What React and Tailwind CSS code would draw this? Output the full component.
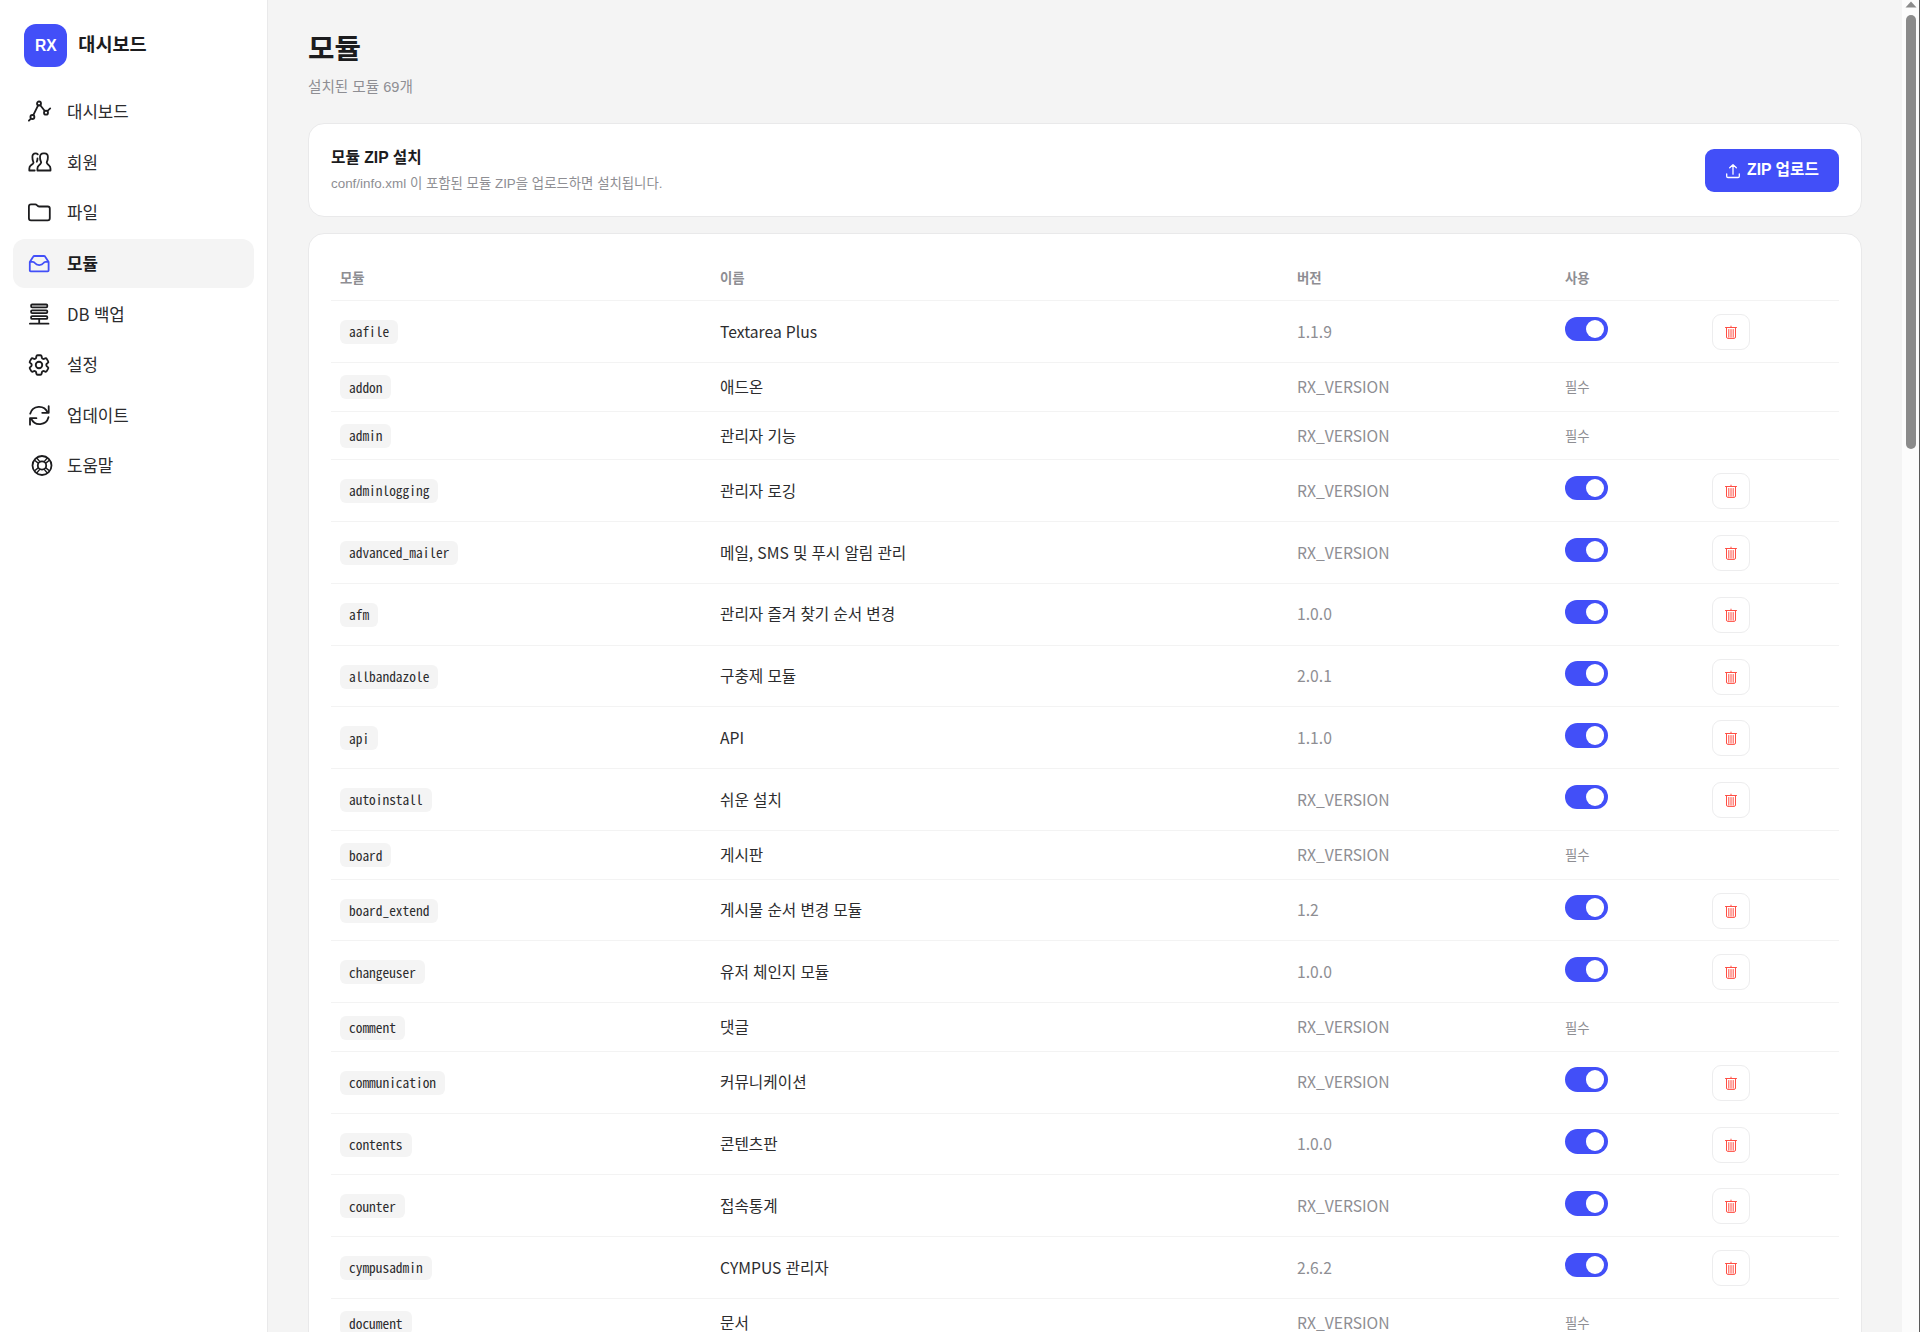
import React from 'react';
import { HiOutlineCog6Tooth } from 'react-icons/hi2';

const modules = [
  ['aafile', 'Textarea Plus', '1.1.9', true],
  ['addon', '애드온', 'RX_VERSION', false],
  ['admin', '관리자 기능', 'RX_VERSION', false],
  ['adminlogging', '관리자 로깅', 'RX_VERSION', true],
  ['advanced_mailer', '메일, SMS 및 푸시 알림 관리', 'RX_VERSION', true],
  ['afm', '관리자 즐겨 찾기 순서 변경', '1.0.0', true],
  ['allbandazole', '구충제 모듈', '2.0.1', true],
  ['api', 'API', '1.1.0', true],
  ['autoinstall', '쉬운 설치', 'RX_VERSION', true],
  ['board', '게시판', 'RX_VERSION', false],
  ['board_extend', '게시물 순서 변경 모듈', '1.2', true],
  ['changeuser', '유저 체인지 모듈', '1.0.0', true],
  ['comment', '댓글', 'RX_VERSION', false],
  ['communication', '커뮤니케이션', 'RX_VERSION', true],
  ['contents', '콘텐츠판', '1.0.0', true],
  ['counter', '접속통계', 'RX_VERSION', true],
  ['cympusadmin', 'CYMPUS 관리자', '2.6.2', true],
  ['document', '문서', 'RX_VERSION', false],
];

function Glyph({ children }) {
  return (
    <svg viewBox="0 0 27 27" className="size-[27px]" fill="none" stroke="currentColor" strokeWidth="1.8" strokeLinecap="round" strokeLinejoin="round">
      {children}
    </svg>
  );
}

const GraphIcon = () => (
  <Glyph>
    <circle cx="6.4" cy="19" r="2" />
    <circle cx="13" cy="5.5" r="2" />
    <circle cx="20" cy="14.7" r="2" />
    <path d="M2.9 22.7 4.9 20.6M7.3 17.1 12.1 7.4M14.3 7.2 18.8 13M21.3 13.1 24.2 10.4" />
  </Glyph>
);

const PeopleIcon = () => (
  <Glyph>
    <path d="M17.3 4.4c-2 0-3.3 1.4-3.3 3.6 0 1.9.3 3.500.9 4.600.5.8.2 1.700-.4 2.200l-1.600 1.600c-1 .9-1.500 1.900-1.500 3.400v1.700h13.100v-1.700c0-1.500-.5-2.500-1.500-3.400l-1.600-1.600c-.6-.5-.9-1.400-.4-2.200.6-1.100.9-2.700.9-4.600 0-2.200-1.300-3.600-3.300-3.600Z" />
    <path d="M11.800 5.400c-.6-.7-1.300-1-2.200-1-2 0-3.200 1.400-3.200 3.600 0 1.900.2 3.500.8 4.600.5.8.3 1.700-.3 2.200L4.700 16.400c-1 .9-1.400 1.900-1.400 3.400v1.700h5.400M11.500 9.500c0 1.500-.3 2.400-.7 3.200" />
  </Glyph>
);

const FolderIcon = () => (
  <Glyph>
    <path d="M2.900 7.500c0-1.400.7-2.100 2.100-2.100h4.300c.7 0 1.100.2 1.600.7l1 .9c.4.4.8.5 1.400.5h8.400c1.400 0 2.100.7 2.100 2.100v9.600c0 1.400-.7 2.100-2.100 2.100H5c-1.400 0-2.100-.7-2.100-2.100Z" />
  </Glyph>
);

const TrayIcon = () => (
  <Glyph>
    <path d="M3.800 12 7 6.900c.4-.7.900-.9 1.700-.9h9c.8 0 1.300.2 1.700.9l3.200 5.100v8.400c0 .6-.3.900-.9.900H4.700c-.6 0-.9-.3-.9-.9ZM3.800 11.900h3.100c.9 0 1.500.4 2 1.200.9 1.300 2.300 2 4.300 2s3.400-.7 4.300-2c.5-.8 1.100-1.200 2-1.200h3.100" />
  </Glyph>
);

const StackIcon = () => (
  <Glyph>
    <rect x="5.1" y="3.500" width="16.200" height="2.800" rx="1" />
    <rect x="5.1" y="9.300" width="16.200" height="2.800" rx="1" />
    <rect x="5.1" y="15.100" width="16.200" height="2.800" rx="1" />
    <path d="M13.200 18.100v4.400M3.900 22.700h18.600" />
  </Glyph>
);

const RefreshIcon = () => (
  <Glyph>
    <path d="M4.200 11.700a9.200 9.200 0 0 1 17.400-1.200M22.700 4.200v6.600h-6.500M22.500 15.200a9.200 9.200 0 0 1-17.300 1.400M4 22.700v-6.500h6.400" />
  </Glyph>
);

const BuoyIcon = () => (
  <Glyph>
    <circle cx="16" cy="13.500" r="9.500" />
    <circle cx="16" cy="13.500" r="4.200" />
    <path d="M8.600 8.200 12.200 11.100M10.700 6 13.800 9.600M23.400 8.200 19.800 11.100M21.300 6 18.200 9.600M8.600 18.800 12.200 15.900M10.700 21 13.800 17.400M23.400 18.800 19.800 15.900M21.300 21 18.200 17.400" strokeWidth="1.400" />
  </Glyph>
);

const UploadIcon = () => (
  <svg viewBox="0 0 16 16" className="mt-0.5 size-4" fill="none" stroke="currentColor" strokeWidth="1.300" strokeLinecap="round" strokeLinejoin="round">
    <path d="M8 11.200V1.800M4.700 4.800 8 1.600l3.300 3.200M1.700 11v2.300c0 .8.400 1.200 1.200 1.200h10.200c.8 0 1.200-.4 1.200-1.200V11" />
  </svg>
);

const TrashIcon = () => (
  <svg viewBox="0 0 14 16" className="h-4 w-3.5" fill="none" stroke="currentColor" strokeLinecap="round" strokeLinejoin="round">
    <path d="M1.500 3.500h11M7 3.200V2.100M2.500 3.600v9.400c0 .9.500 1.400 1.400 1.400h6.200c.9 0 1.400-.5 1.400-1.400V3.600M4.800 5.500v7.700M7 5.500v7.700M9.200 5.500v7.700" />
  </svg>
);

const nav = [
  ['대시보드', <GraphIcon />],
  ['회원', <PeopleIcon />],
  ['파일', <FolderIcon />],
  ['모듈', <TrayIcon />],
  ['DB 백업', <StackIcon />],
  ['설정', <HiOutlineCog6Tooth className="size-[26px]" strokeWidth="1.7" />],
  ['업데이트', <RefreshIcon />],
  ['도움말', <BuoyIcon />],
];

function Sidebar() {
  return (
    <aside className="flex w-[268px] shrink-0 flex-col border-r border-[#e9e9ea] bg-white px-[13.300px] pt-[24.300px]">
      <div className="flex h-[43px] items-center gap-[11px] pl-[11px]">
        <div className="flex size-[43px] items-center justify-center rounded-xl bg-[#424ff8] font-['Liberation_Sans',sans-serif] text-[15.6px] font-bold text-white">
          RX
        </div>
        <span className="-mt-px font-['Liberation_Sans','Noto_Sans_CJK_KR',sans-serif] text-[18.600px] leading-none font-bold text-[#1c1c1e]">대시보드</span>
      </div>
      <nav className="mt-[20.300px] flex flex-col gap-[2.400px]">
        {nav.map(([label, icon]) => {
          const active = label === '모듈';
          return (
            <a
              key={label}
              className={
                active
                  ? 'flex h-[48.200px] items-center rounded-xl bg-[#f4f4f4] pl-[12.700px] text-[16.800px] leading-none font-bold text-[#1c1c1e]'
                  : 'flex h-[48.200px] items-center rounded-xl pl-[12.700px] text-[16.800px] leading-none [word-spacing:0.6px] text-[#2c2c2e]'
              }
            >
              <span className={active ? 'flex w-[41px] items-center text-[#424ff8]' : 'flex w-[41px] items-center text-[#1c1c1e]'}>{icon}</span>
              {label}
            </a>
          );
        })}
      </nav>
    </aside>
  );
}

function Row({ item }) {
  const [id, name, version, optional] = item;
  return (
    <div
      className={
        optional
          ? 'grid h-[61.800px] shrink-0 grid-cols-[380px_577px_268px_146px_1fr] items-center border-b border-[#f3f3f3]'
          : 'grid h-[48.600px] shrink-0 grid-cols-[380px_577px_268px_146px_1fr] items-center border-b border-[#f3f3f3]'
      }
    >
      <div className="flex pl-[9px] pt-px">
        <code className="flex h-6 items-center rounded-md bg-[#f4f4f4] px-[9px] font-['Noto_Sans_Mono_CJK_KR',monospace] text-[13.400px] leading-none text-[#2c2c2e]">{id}</code>
      </div>
      <div className="pl-[9px] text-[15.700px] leading-none [word-spacing:0.6px] text-[#2c2c2e]">{name}</div>
      <div className="pl-[9px] text-[15.700px] leading-none text-[#8e8e93]">{version}</div>
      <div className="pl-[9px]">
        {optional ? (
          <div className="mb-[5px] flex h-[24.500px] w-[42.500px] items-center justify-end rounded-full bg-[#424ff8] pr-[3.500px]">
            <span className="size-[18.500px] rounded-full bg-white" />
          </div>
        ) : (
          <div className="pt-[0.600px] text-[13.400px] leading-none text-[#8e8e93]">필수</div>
        )}
      </div>
      <div className="pl-2.5">
        {optional && (
          <button className="mt-px flex h-9 w-[38px] items-center justify-center rounded-[9px] border border-[#ededee] text-[#ff4f44]">
            <TrashIcon />
          </button>
        )}
      </div>
    </div>
  );
}

function Scrollbar() {
  return (
    <div className="flex w-[18px] shrink-0 border-r border-[#5a5a5a] bg-[#fcfcfc]">
      <div className="flex w-full flex-col items-center">
        <svg viewBox="0 0 12 15" className="h-[15px] w-3 shrink-0">
          <path d="M6 1.500 11.500 7.500H.5Z" fill="#8b8b8b" />
        </svg>
        <div className="h-[434px] w-2.5 shrink-0 rounded-full bg-[#8b8b8b]" />
      </div>
    </div>
  );
}

export default function App() {
  return (
    <div className="flex h-[1332px] w-[1920px] overflow-hidden bg-[#f4f4f4] font-['Noto_Sans_CJK_KR',sans-serif]">
      <Sidebar />
      <main className="flex h-[1332px] min-w-0 flex-1 flex-col overflow-hidden pr-10 pl-10">
        <h1 className="mt-[33px] font-['Liberation_Sans','Noto_Sans_CJK_KR',sans-serif] text-[28.800px] leading-[32px] font-bold text-[#1c1c1e]">모듈</h1>
        <p className="mt-[12px] font-['Liberation_Sans','Noto_Sans_CJK_KR',sans-serif] text-[14.600px] leading-[20px] text-[#8e8e93]">설치된 모듈 69개</p>
        <section className="mt-[26px] flex h-[94px] shrink-0 items-center justify-between rounded-2xl border border-[#e9e9ea] bg-white px-[22px] font-['Liberation_Sans','Noto_Sans_CJK_KR',sans-serif]">
          <div>
            <h2 className="mt-px text-[15.700px] leading-[22px] font-bold text-[#1c1c1e]">모듈 ZIP 설치</h2>
            <p className="mt-[5px] text-[13.400px] leading-[20px] text-[#8e8e93]">conf/info.xml 이 포함된 모듈 ZIP을 업로드하면 설치됩니다.</p>
          </div>
          <button className="flex h-[43px] w-[134px] items-center justify-center gap-[6px] rounded-[9px] bg-[#424ff8] text-[15.700px] leading-none font-bold text-white">
            <UploadIcon />
            <span>ZIP 업로드</span>
          </button>
        </section>
        <section className="mt-4 h-[1200px] shrink-0 rounded-t-2xl border border-[#e9e9ea] bg-white px-[22px] pt-[22px]">
          <div className="grid h-[45.300px] grid-cols-[380px_577px_268px_146px_1fr] items-center border-b border-[#f3f3f3] text-[13.400px] leading-none font-bold text-[#8e8e93]">
            <span className="pl-[9px]">모듈</span>
            <span className="pl-[9px]">이름</span>
            <span className="pl-[9px]">버전</span>
            <span className="pl-[9px]">사용</span>
          </div>
          {modules.map((m) => (
            <Row key={m[0]} item={m} />
          ))}
        </section>
      </main>
      <Scrollbar />
    </div>
  );
}
